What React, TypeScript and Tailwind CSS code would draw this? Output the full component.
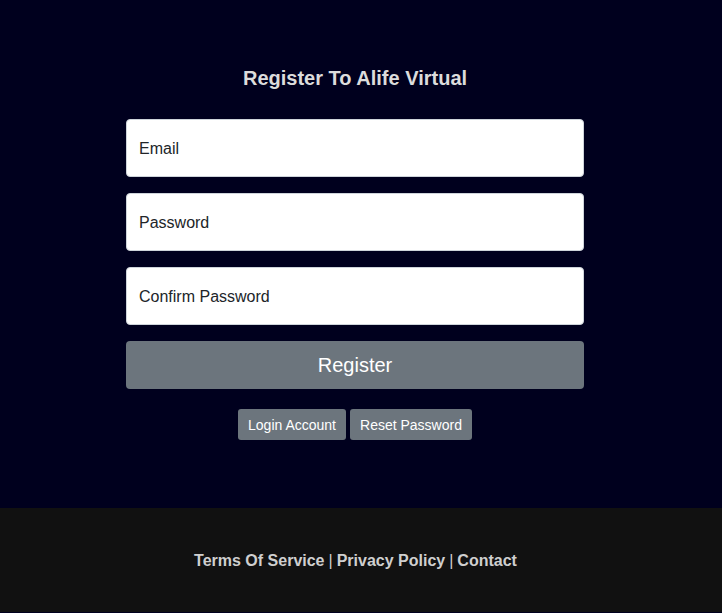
import React from "react";

const fields = ["Email", "Password", "Confirm Password"];

export default function App() {
  return (
    <div className="min-h-[613px] bg-[#00001e] font-['Liberation_Sans',Arial,sans-serif]">
      {/* Form area */}
      <main className="h-[508px] pr-[12px] pt-[64px]">
        <div className="mx-auto w-[458px]">
          <h1 className="text-center text-[20px] font-bold leading-[28px] text-[#dcdcdc] mb-[27px]">
            Register To Alife Virtual
          </h1>
          <form className="flex flex-col gap-4" onSubmit={(e) => e.preventDefault()}>
            {fields.map((f) => (
              <input
                key={f}
                type={f === "Email" ? "email" : "password"}
                placeholder={f}
                className="h-[58px] w-full rounded-[4px] border border-[#ced4da] bg-white px-[12px] pt-[2px] text-[16px] text-[#212529] placeholder:text-[#212529] outline-none"
              />
            ))}
            <button
              type="submit"
              className="h-[48px] w-full rounded-[4px] bg-[#6c757d] text-[20px] text-white"
            >
              Register
            </button>
          </form>
          <div className="mt-[20px] flex justify-center gap-[4px]">
            <button className="h-[31px] rounded-[3px] bg-[#6c757d] px-[10px] pt-[1px] text-[14px] text-white">
              Login Account
            </button>
            <button className="h-[31px] rounded-[3px] bg-[#6c757d] px-[10px] pt-[1px] text-[14px] text-white">
              Reset Password
            </button>
          </div>
        </div>
      </main>

      {/* Footer */}
      <footer className="flex h-[104px] items-center justify-center bg-[#111111] pr-[11px] pt-[2px] text-[16px] text-[#cfcfcf]">
        <a href="#" className="font-bold">Terms Of Service</a>
        <span className="px-[4px]">|</span>
        <a href="#" className="font-bold">Privacy Policy</a>
        <span className="px-[4px]">|</span>
        <a href="#" className="font-bold">Contact</a>
      </footer>
    </div>
  );
}
